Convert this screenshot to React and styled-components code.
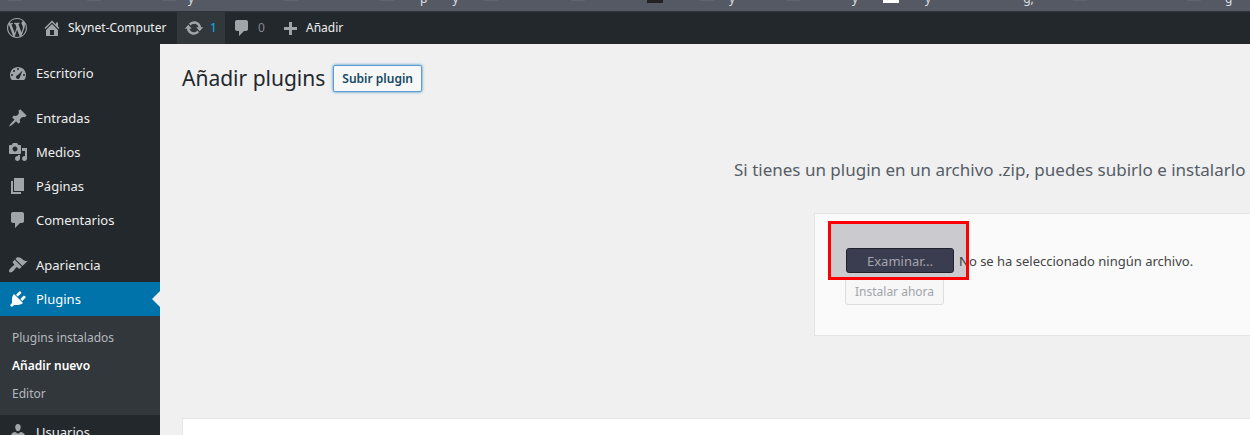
import React, { useRef } from "react";
import styled, { createGlobalStyle, css } from "styled-components";

const GlobalStyle = createGlobalStyle`
  *, *::before, *::after { box-sizing: border-box; }
  body {
    margin: 0;
    background: #f0f0f0;
    color: #444;
    font: 12px/20px "Noto Sans", "Open Sans", sans-serif;
  }
  a { color: inherit; text-decoration: none; }
  button { font: inherit; cursor: pointer; }
  h1, p, ul { margin: 0; padding: 0; font-weight: 400; }
  ul { list-style: none; }
`;

const Shell = styled.div`
  height: 100vh;
  display: flex;
  flex-direction: column;
  overflow: hidden;
`;

/* Browser bookmarks strip */
const Bookmarks = styled.div`
  flex: none;
  display: flex;
  align-items: flex-end;
  height: 12px;
  padding-left: 8px;
  background: #555963;
  border-bottom: 1px solid #30343a;
  overflow: hidden;
`;
const Bookmark = styled.div`
  flex: none;
  display: flex;
  width: ${(p) => p.$w}px;
  height: 20px;
  color: #dcdee2;
  line-height: 16px;
  white-space: pre;
`;
const Favicon = styled.span`
  flex: none;
  width: ${(p) => (p.$color ? 16 : 14)}px;
  height: ${(p) => (p.$color ? 12 : 10)}px;
  background: ${(p) => p.$color || "#60646e"};
`;
const BookmarkLabel = styled.span`
  margin-left: ${(p) => p.$gap}px;
`;

/* Admin bar */
const AdminBar = styled.nav`
  flex: none;
  display: flex;
  height: 32px;
  background: #23282d;
  color: #eee;
`;
const BarLink = styled.a`
  display: flex;
  align-items: center;
  gap: 6px;
  min-width: ${(p) => p.$min || 0}px;
  padding: 0 8px 0 7px;
  color: ${(p) => p.$color || "#eee"};
  background: ${(p) => (p.$active ? "#32373c" : "transparent")};
`;

const Body = styled.div`
  flex: 1;
  display: flex;
  min-height: 0;
`;

/* Side menu */
const SideMenu = styled.nav`
  flex: none;
  width: 160px;
  padding-top: 12px;
  background: #23282d;
`;
const MenuItem = styled.li`
  margin-top: ${(p) => (p.$separated ? 11 : 0)}px;
`;
const MenuLink = styled.a`
  position: relative;
  display: flex;
  align-items: center;
  gap: 8px;
  height: 34px;
  padding-left: 8px;
  font-size: 13px;
  color: ${(p) => (p.$current ? "#fff" : "#eee")};
  ${(p) =>
    p.$current &&
    css`
      background: #0073aa;
      &::after {
        content: "";
        position: absolute;
        right: 0;
        top: 9px;
        border: 8px solid transparent;
        border-right-color: #f0f0f0;
        border-left-width: 0;
      }
    `}
`;
const Submenu = styled.ul`
  padding: 8px 0 7px;
  background: #32373c;
`;
const SubLink = styled.a`
  display: block;
  padding: 4px 12px;
  color: ${(p) => (p.$current ? "#fff" : "#b4b9be")};
  font-weight: ${(p) => (p.$current ? 600 : 400)};
`;
const Glyph = styled.svg`
  flex: none;
  width: 20px;
  height: 20px;
  fill: ${(p) => p.$color || "#a0a5aa"};
`;

/* Content */
const Content = styled.main`
  flex: 1;
  min-width: 0;
  padding: 19px 0 0 22px;
  overflow: hidden;
`;
const Heading = styled.header`
  display: flex;
  align-items: center;
  gap: 8px;
  height: 30px;
`;
const Title = styled.h1`
  font-size: 21px;
  line-height: 30px;
  color: #23282d;
`;
const PageAction = styled.button`
  height: 27px;
  padding: 1px 8px 0;
  border: 1px solid #5b9dd9;
  border-radius: 2px;
  background: #f7f7f7;
  box-shadow: 0 0 3px rgba(0, 115, 170, 0.8);
  color: #124964;
  font-weight: 600;
`;
const Upload = styled.section`
  margin-top: 62px;
  padding-left: calc(50% + 18px);
`;
const Help = styled.p`
  font-size: 17px;
  line-height: 30px;
  color: #555d66;
  white-space: nowrap;
`;
const UploadForm = styled.form`
  position: relative;
  height: 123px;
  margin: 28px 0 0 80px;
  padding: 34px 0 0 30px;
  border: 1px solid #e5e5e5;
  border-right: 0;
  background: #fafafa;
`;
const FileRow = styled.div`
  display: flex;
  align-items: center;
  gap: 5px;
  padding-left: 1px;
  font-size: 13px;
  color: #444;
  white-space: nowrap;
`;
const BrowseButton = styled.button`
  width: 108px;
  height: 25px;
  padding: 0;
  border: 1px solid #252731;
  border-radius: 3px;
  background: #434658;
  color: #c8c9d1;
`;
const InstallButton = styled.button`
  display: block;
  height: 28px;
  margin-top: 4px;
  padding: 1px 9px 0;
  border: 1px solid #ddd;
  border-radius: 3px;
  background: #f7f7f7;
  color: #a0a5aa;
`;
const Highlight = styled.div`
  position: absolute;
  left: 13px;
  top: 7px;
  width: 141px;
  height: 59px;
  border: 3px solid #f00;
  background: rgba(30, 25, 45, 0.21);
  pointer-events: none;
`;
const PluginPanel = styled.section`
  height: 60px;
  margin-top: 82px;
  border: 1px solid #e5e5e5;
  border-right: 0;
  background: #fff;
`;

const paths = {
  wordpress:
    "M20 10c0-5.51-4.49-10-10-10C4.48 0 0 4.49 0 10c0 5.52 4.48 10 10 10 5.51 0 10-4.48 10-10zM7.78 15.37L4.37 6.22c.55-.02 1.17-.08 1.17-.08.5-.06.44-1.13-.06-1.11 0 0-1.45.11-2.37.11-.18 0-.37 0-.58-.01C4.12 2.69 6.87 1.11 10 1.11c2.33 0 4.45.87 6.05 2.34-.68-.11-1.65.39-1.65 1.58 0 .74.45 1.36.9 2.1.35.61.55 1.36.55 2.46 0 1.49-1.4 5-1.4 5l-3.03-8.37c.54-.02.82-.17.82-.17.5-.05.44-1.25-.06-1.22 0 0-1.44.12-2.38.12-.87 0-2.33-.12-2.33-.12-.5-.03-.56 1.2-.06 1.22l.92.08 1.26 3.41zM17.41 10c.24-.64.74-1.87.43-4.25.7 1.29 1.05 2.71 1.05 4.25 0 3.29-1.73 6.24-4.4 7.78.97-2.59 1.94-5.2 2.92-7.78zM6.1 18.09C3.12 16.65 1.11 13.53 1.11 10c0-1.3.23-2.48.72-3.59C3.25 10.3 4.67 14.2 6.1 18.09zm4.03-6.63l2.58 6.98c-.86.29-1.76.45-2.71.45-.79 0-1.57-.11-2.29-.33.81-2.38 1.62-4.74 2.42-7.1z",
  home: "M16 8.5l1.53 1.53-1.06 1.06L10 4.6l-6.47 6.49-1.06-1.06L10 2.5l4 4v-2h2v4zm-6-2.46l6 5.99V18H4v-5.97zM12 17v-5H8v5h4z",
  update:
    "M10.2 3.28c3.53 0 6.43 2.61 6.92 6h2.08l-3.5 4-3.5-4h2.32c-.45-1.97-2.21-3.45-4.32-3.45-1.45 0-2.73.71-3.54 1.78L4.95 5.66C6.23 4.2 8.11 3.28 10.2 3.28zm-.4 13.44c-3.52 0-6.43-2.61-6.92-6H.8l3.5-4c1.17 1.33 2.33 2.67 3.5 4H5.48c.45 1.97 2.21 3.45 4.32 3.45 1.45 0 2.73-.71 3.54-1.78l1.71 1.95c-1.28 1.46-3.15 2.38-5.25 2.38z",
  comments:
    "M5 2h9c1.1 0 2 .9 2 2v7c0 1.1-.9 2-2 2h-2l-5 5v-5H5c-1.1 0-2-.9-2-2V4c0-1.1.9-2 2-2z",
  plus: "M17 9v3h-5v5H9v-5H4V9h5V4h3v5z",
  dashboard:
    "M3.76 17h12.48c1.34-1.63 1.76-3.45 1.76-5 0-4.42-3.58-8-8-8s-8 3.58-8 8c0 1.55.42 3.37 1.76 5zM9 6a1 1 0 1 1 2 0a1 1 0 1 1-2 0zM5 8a1 1 0 1 1 2 0a1 1 0 1 1-2 0zM14.6 7.4L11.9 14.2C11.7 15.4 11 16 10 16C8.9 16 8 15.1 8 14C8 13 8.8 12.2 9.9 12zM3 12a1 1 0 1 1 2 0a1 1 0 1 1-2 0zM15 12a1 1 0 1 1 2 0a1 1 0 1 1-2 0z",
  pin: "M10.44 3.02l1.82-1.82 6.36 6.35-1.83 1.82c-1.05-.68-2.48-.57-3.41.36l-.75.75c-.92.93-1.04 2.35-.35 3.41l-1.83 1.82-2.41-2.41-2.8 2.79c-.42.42-3.38 2.71-3.8 2.29s1.86-3.39 2.28-3.81l2.79-2.79L4.1 9.36l1.83-1.82c1.05.69 2.48.57 3.4-.36l.75-.75c.93-.92 1.05-2.35.36-3.41z",
  media:
    "M13 11V4c0-.55-.45-1-1-1h-1.67L9 1H5L3.67 3H2c-.55 0-1 .45-1 1v7c0 .55.45 1 1 1h10c.55 0 1-.45 1-1zM7 4.5c1.38 0 2.5 1.12 2.5 2.5S8.38 9.5 7 9.5 4.5 8.38 4.5 7 5.62 4.5 7 4.5zM14 6h5v10.5c0 1.38-1.12 2.5-2.5 2.5S14 17.88 14 16.5s1.12-2.5 2.5-2.5c.17 0 .34.02.5.05V9h-3V6zm-4 8.05V13h2v3.5c0 1.38-1.12 2.5-2.5 2.5S7 17.88 7 16.5 8.12 14 9.5 14c.17 0 .34.02.5.05z",
  page: "M6 15V2h10v13H6zm-1 1h8v2H3V5h2v11z",
  appearance:
    "M14.48 11.06L7.41 3.99l1.5-1.5c.5-.56 2.3-.47 3.51.32 1.21.8 1.43 1.28 2.91 2.1 1.18.64 2.45 1.26 4.45.85zm-.71.71L6.7 4.7 4.93 6.47c-.39.39-.39 1.02 0 1.41l1.06 1.06c.39.39.39 1.03 0 1.42-.6.6-1.43 1.11-2.21 1.69-.35.26-.7.53-1.01.84C1.43 14.23.4 16.08 1.4 17.07c.99 1 2.84-.03 4.18-1.36.31-.31.58-.66.85-1.02.57-.78 1.08-1.61 1.69-2.21.39-.39 1.02-.39 1.41 0l1.06 1.06c.39.39 1.02.39 1.41 0z",
  plugins:
    "M13.11 4.36L9.87 7.6 8 5.73l3.24-3.24c.35-.34 1.05-.2 1.56.32.52.51.66 1.21.31 1.55zm-8 1.77l.91-1.12 9.01 9.01-1.19.84c-.71.71-2.63 1.16-3.82 1.16H6.14L4.9 17.26c-.59.59-1.54.59-2.12 0-.59-.58-.59-1.53 0-2.12l1.24-1.24v-3.88c0-1.13.4-3.19 1.09-3.89zm7.26 3.97l3.24-3.24c.34-.35 1.04-.21 1.55.31.52.51.66 1.21.31 1.55l-3.24 3.25z",
  users:
    "M10 9.25c-2.27 0-2.73-3.44-2.73-3.44C7 4.02 7.82 2 9.97 2c2.16 0 2.98 2.02 2.71 3.81 0 0-.41 3.44-2.68 3.44zm0 2.57L12.72 10c2.39 0 4.52 2.33 4.52 4.53v2.49s-3.65 1.13-7.24 1.13c-3.65 0-7.24-1.13-7.24-1.13v-2.49c0-2.25 1.94-4.48 4.47-4.48z",
};

function Icon({ name, color }) {
  return (
    <Glyph viewBox="0 0 20 20" $color={color} aria-hidden="true">
      <path fillRule="evenodd" d={paths[name]} />
    </Glyph>
  );
}

/* Each label is a [gap before it, text] pair */
const bookmarks = [
  { w: 79 },
  { w: 75 },
  { w: 122, labels: [[12, "y"]] },
  { w: 96 },
  { w: 104, labels: [[26, "p"], [25, "y"]] },
  { w: 87 },
  { w: 76 },
  { w: 53, color: "#222" },
  { w: 86, labels: [[15, "y"]] },
  { w: 97, labels: [[52, "y"]] },
  { w: 190, color: "#fff", labels: [[26, "y"], [92, "g,"]] },
  { w: 114 },
  { w: 60, labels: [[24, "g"]] },
];

const menu = [
  { icon: "dashboard", text: "Escritorio" },
  { icon: "pin", text: "Entradas", separated: true },
  { icon: "media", text: "Medios" },
  { icon: "page", text: "Páginas" },
  { icon: "comments", text: "Comentarios" },
  { icon: "appearance", text: "Apariencia", separated: true },
  {
    icon: "plugins",
    text: "Plugins",
    current: true,
    children: ["Plugins instalados", "Añadir nuevo", "Editor"],
  },
  { icon: "users", text: "Usuarios" },
];

export default function App() {
  const fileInput = useRef(null);
  return (
    <Shell>
      <GlobalStyle />
      <Bookmarks>
        {bookmarks.map((b, i) => (
          <Bookmark key={i} $w={b.w}>
            <Favicon $color={b.color} />
            {b.labels?.map(([gap, text]) => (
              <BookmarkLabel key={text} $gap={gap}>
                {text}
              </BookmarkLabel>
            ))}
          </Bookmark>
        ))}
      </Bookmarks>
      <AdminBar>
        <BarLink href="#" aria-label="WordPress">
          <Icon name="wordpress" />
        </BarLink>
        <BarLink href="#" $min={142}>
          <Icon name="home" />
          Skynet-Computer
        </BarLink>
        <BarLink href="#" $active $min={48} $color="#00b9eb">
          <Icon name="update" />1
        </BarLink>
        <BarLink href="#" $min={48} $color="#82878c">
          <Icon name="comments" />0
        </BarLink>
        <BarLink href="#">
          <Icon name="plus" />
          Añadir
        </BarLink>
      </AdminBar>
      <Body>
        <SideMenu>
          <ul>
            {menu.map((m) => (
              <MenuItem key={m.text} $separated={m.separated}>
                <MenuLink href="#" $current={m.current}>
                  <Icon name={m.icon} color={m.current && "#fff"} />
                  {m.text}
                </MenuLink>
                {m.children && (
                  <Submenu>
                    {m.children.map((c) => (
                      <li key={c}>
                        <SubLink href="#" $current={c === "Añadir nuevo"}>
                          {c}
                        </SubLink>
                      </li>
                    ))}
                  </Submenu>
                )}
              </MenuItem>
            ))}
          </ul>
        </SideMenu>
        <Content>
          <Heading>
            <Title>Añadir plugins</Title>
            <PageAction type="button">Subir plugin</PageAction>
          </Heading>
          <Upload>
            <Help>
              Si tienes un plugin en un archivo .zip, puedes subirlo e instalarlo desde aquí.
            </Help>
            <UploadForm>
              <FileRow>
                <input ref={fileInput} type="file" accept=".zip" aria-label="Examinar" hidden />
                <BrowseButton type="button" onClick={() => fileInput.current.click()}>
                  Examinar...
                </BrowseButton>
                <span>No se ha seleccionado ningún archivo.</span>
              </FileRow>
              <InstallButton type="submit">Instalar ahora</InstallButton>
              <Highlight />
            </UploadForm>
          </Upload>
          <PluginPanel />
        </Content>
      </Body>
    </Shell>
  );
}
